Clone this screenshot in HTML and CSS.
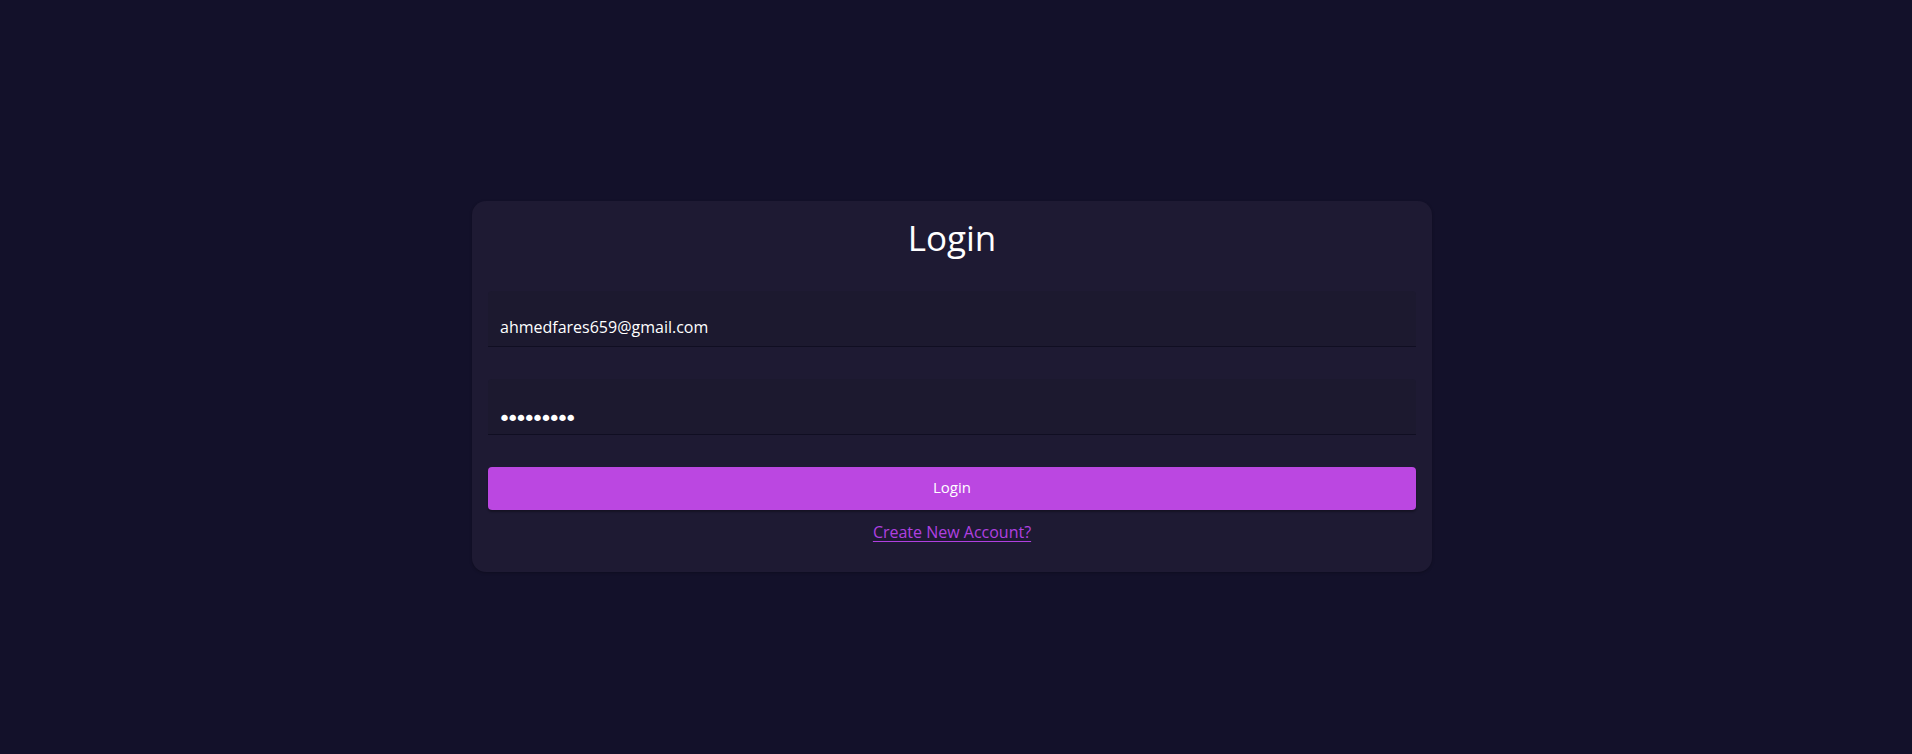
FILE: index.html
```html
<!DOCTYPE html>
<html lang="en">
<head>
<meta charset="utf-8">
<title>Login</title>
<link rel="stylesheet" href="styles.css">
</head>
<body>
<main class="page">
  <form class="card">
    <h1 class="title">Login</h1>
    <div class="field">
      <input class="field-input" type="email" value="ahmedfares659@gmail.com">
    </div>
    <div class="field">
      <input class="field-input field-password" type="password" value="123456789">
    </div>
    <button class="btn" type="button">Login</button>
    <a class="link" href="#">Create New Account?</a>
  </form>
</main>
</body>
</html>
```
FILE: styles.css
```css
* { box-sizing: border-box; }
html, body {
  margin: 0;
  padding: 0;
  background: #13112a;
  font-family: "Open Sans", "Lato", sans-serif;
  color: #fff;
}
.page {
  min-height: 754px;
  display: flex;
  justify-content: center;
  align-items: flex-start;
  padding: 201px 8px 0 0;
}
.card {
  width: 960px;
  background: #1e1a33;
  border-radius: 14px;
  padding: 16px 16px 28px;
  display: flex;
  flex-direction: column;
  box-shadow: 0 1px 3px rgba(0,0,0,0.25);
}
.title {
  margin: 0 0 32px;
  font-size: 35px;
  font-weight: 400;
  line-height: 42px;
  text-align: center;
  color: #fff;
}
.field {
  height: 56px;
  background: #1c192f;
  border-radius: 4px 4px 0 0;
  border-bottom: 1px solid #100e22;
  margin-bottom: 32px;
  display: flex;
}
.field-input {
  flex: 1;
  border: 0;
  outline: 0;
  background: transparent;
  color: #fff;
  font-family: inherit;
  font-size: 16px;
  font-weight: 500;
  padding: 25px 12px 8px;
  line-height: 22px;
}
.field-password {
  font-family: "DejaVu Sans", sans-serif;
  font-size: 22px;
  letter-spacing: -4.7px;
  padding: 28px 12px 5px 10px;
}
.btn {
  height: 43px;
  border: 0;
  border-radius: 4px;
  background: #bb47e1;
  color: #fff;
  font-family: inherit;
  font-size: 15px;
  line-height: 20px;
  padding: 0 0 3px;
  box-shadow: 0 2px 2px rgba(0,0,0,0.3);
  cursor: pointer;
  margin-bottom: 10px;
}
.link {
  align-self: center;
  font-size: 16px;
  line-height: 24px;
  color: #b040e0;
  text-decoration: underline;
  text-underline-offset: 3px;
}
```
